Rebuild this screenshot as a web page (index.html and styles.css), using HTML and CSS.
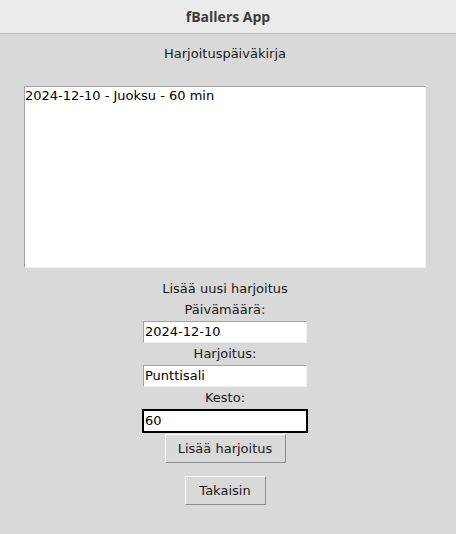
FILE: index.html
```html
<!DOCTYPE html>
<html lang="fi">
<head>
<meta charset="utf-8">
<title>fBallers App</title>
<link rel="stylesheet" href="styles.css">
</head>
<body>
<div class="window">
  <header class="titlebar">fBallers App</header>
  <main class="content">
    <div class="heading">Harjoituspäiväkirja</div>
    <div class="listbox">
      <div class="list-item">2024-12-10 - Juoksu - 60 min</div>
    </div>
    <div class="form">
      <div class="label first">Lisää uusi harjoitus</div>
      <div class="label">Päivämäärä:</div>
      <div class="entry">2024-12-10</div>
      <div class="label">Harjoitus:</div>
      <div class="entry">Punttisali</div>
      <div class="label">Kesto:</div>
      <div class="entry focused">60</div>
      <button class="btn btn-add">Lisää harjoitus</button>
      <button class="btn btn-back">Takaisin</button>
    </div>
  </main>
</div>
</body>
</html>
```
FILE: styles.css
```css
* { box-sizing: border-box; }
html, body {
  margin: 0;
  padding: 0;
  width: 456px;
  height: 534px;
  background: #d9d9d9;
  overflow: hidden;
}
.window {
  display: flex;
  flex-direction: column;
  height: 534px;
  font-family: "DejaVu Sans", sans-serif;
  font-size: 13px;
  color: #1a1a1a;
}
.titlebar {
  height: 34px;
  background: #ebebeb;
  border-bottom: 1px solid #bdbdbd;
  display: flex;
  align-items: center;
  justify-content: center;
  font-family: "Open Sans", "DejaVu Sans", sans-serif;
  font-weight: 700;
  font-size: 14px;
  color: #3c3c3c;
  padding-bottom: 1px;
}
.content {
  flex: 1;
  display: flex;
  flex-direction: column;
  align-items: center;
  background: #d9d9d9;
  padding-right: 6px;
}
.heading {
  margin-top: 9px;
  height: 21px;
  line-height: 21px;
}
.listbox {
  margin-top: 22px;
  width: 402px;
  height: 182px;
  background: #ffffff;
  border-top: 1px solid #a3a3a3;
  border-left: 1px solid #a3a3a3;
  border-bottom: 1px solid #f2f2f2;
  border-right: 1px solid #f2f2f2;
  padding: 0;
}
.list-item {
  height: 17px;
  line-height: 17px;
  color: #000;
  padding-left: 0;
}
.form {
  display: flex;
  flex-direction: column;
  align-items: center;
  margin-top: 10px;
}
.label {
  height: 22px;
  line-height: 22px;
}
.label.first { height: 21px; }
.entry {
  width: 164px;
  height: 22px;
  line-height: 20px;
  background: #fff;
  border-top: 1px solid #a3a3a3;
  border-left: 1px solid #a3a3a3;
  border-bottom: 1px solid #f2f2f2;
  border-right: 1px solid #f2f2f2;
  padding-left: 1px;
  color: #000;
}
.entry.focused {
  width: 166px;
  height: 24px;
  border: 2px solid #000;
  line-height: 20px;
  padding-left: 1px;
}
.btn {
  font-family: "DejaVu Sans", sans-serif;
  font-size: 13px;
  color: #1a1a1a;
  background: #d9d9d9;
  border-top: 1px solid #ffffff;
  border-left: 1px solid #ffffff;
  border-bottom: 1px solid #8a8a8a;
  border-right: 1px solid #8a8a8a;
  height: 29px;
  padding: 0 12px;
  margin: 0;
}
.btn-add { width: 121px; margin-top: 1px; }
.btn-back { width: 81px; margin-top: 13px; }
```
